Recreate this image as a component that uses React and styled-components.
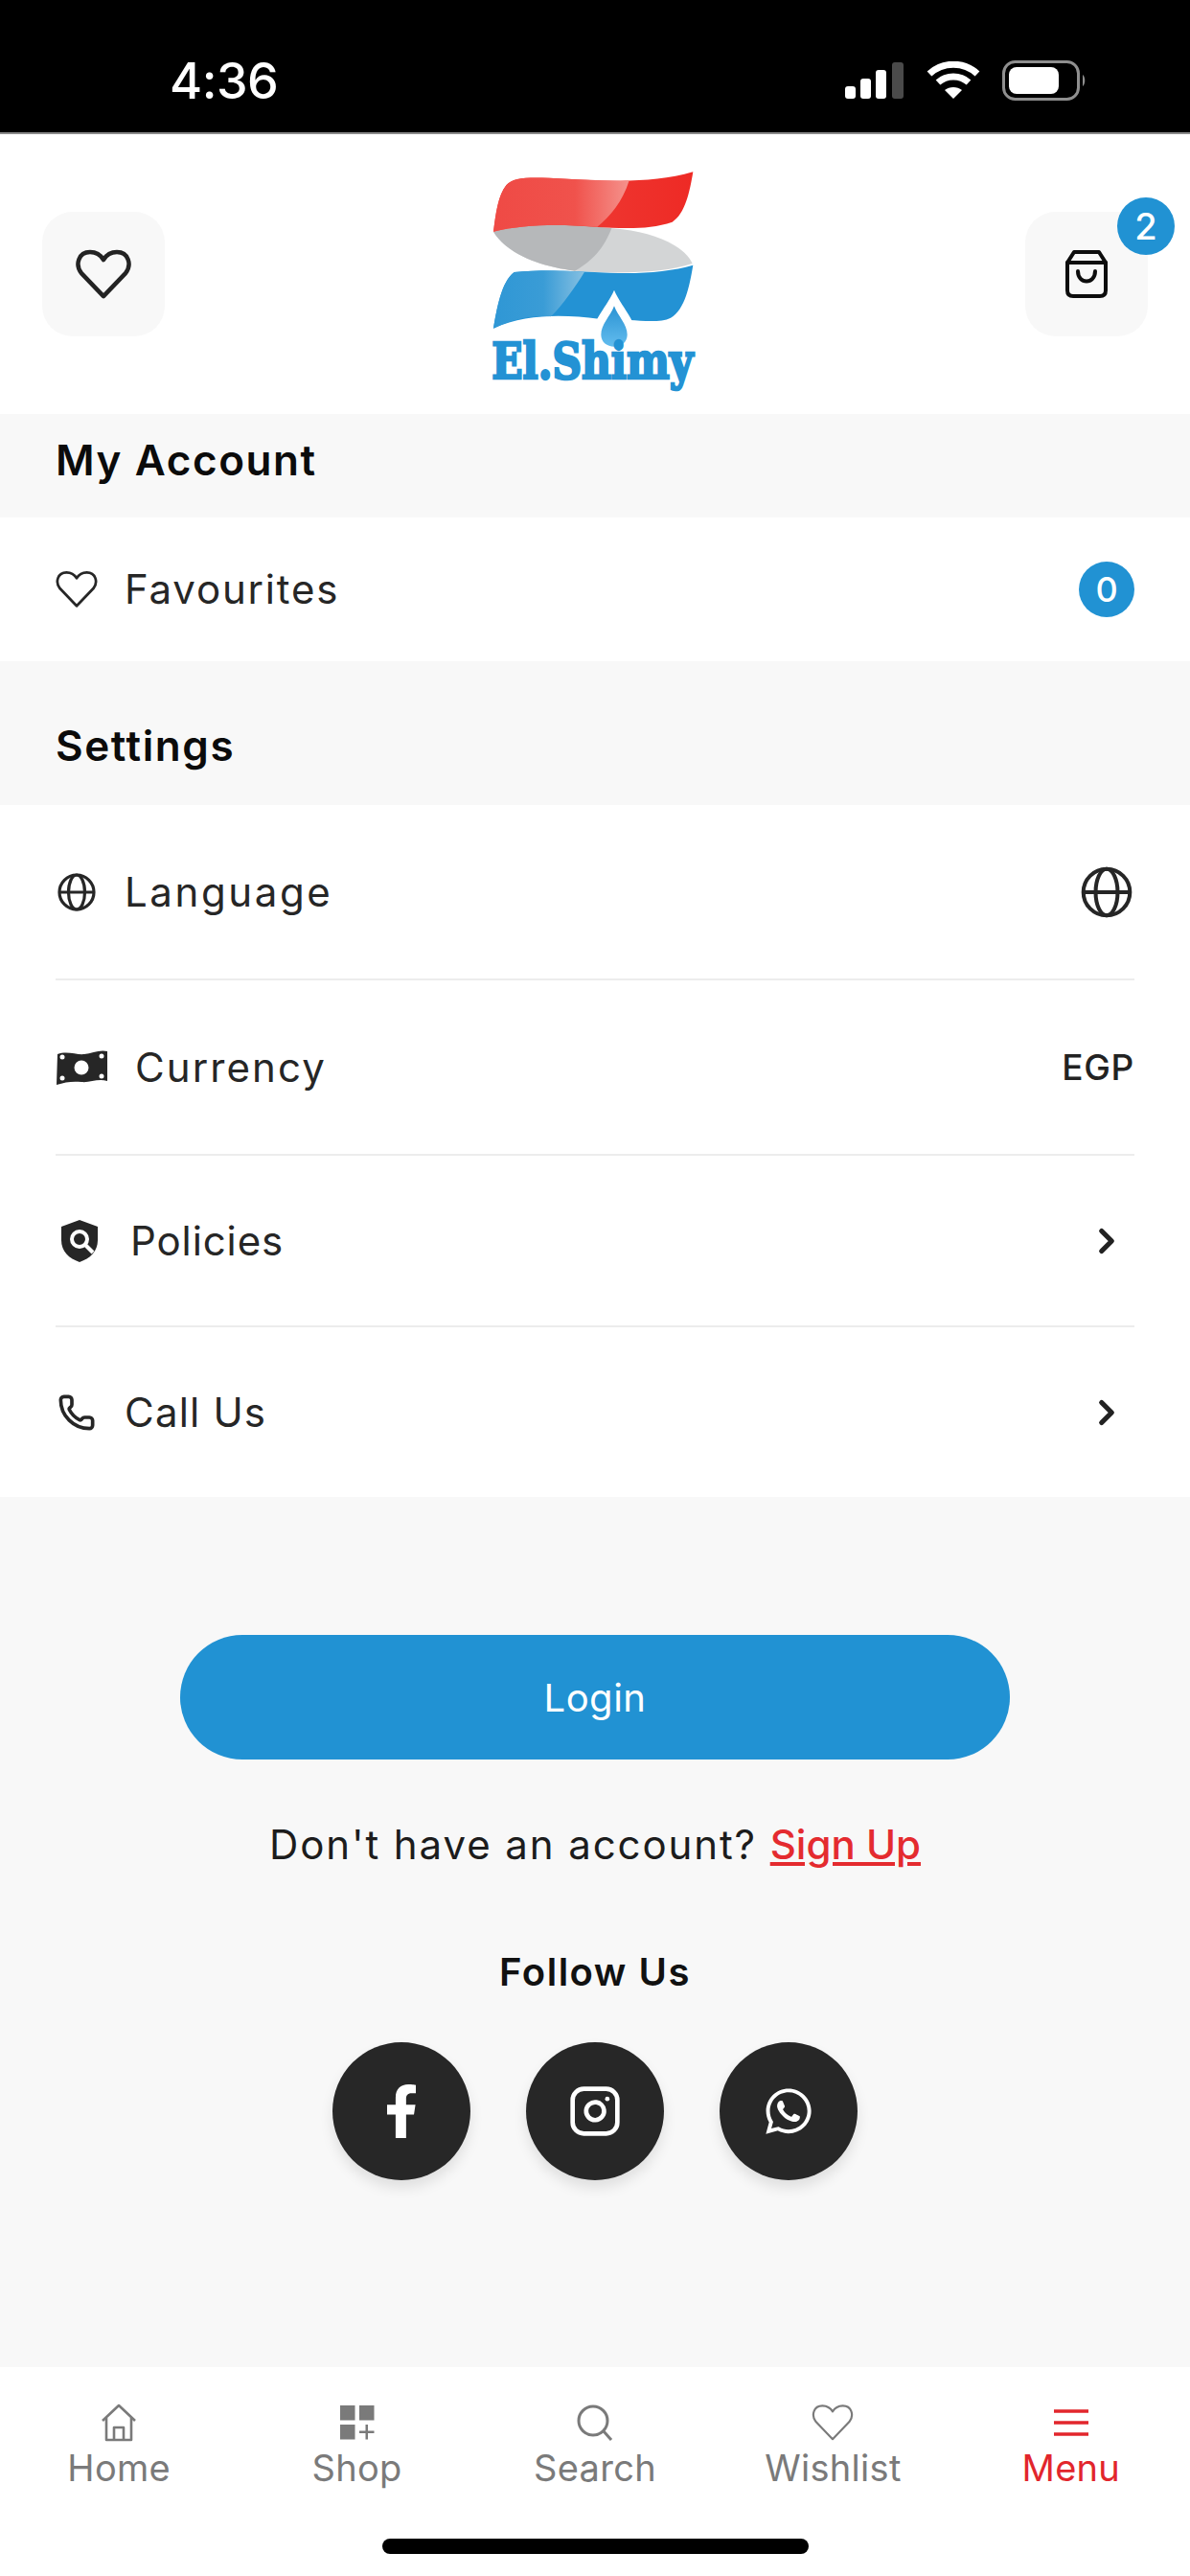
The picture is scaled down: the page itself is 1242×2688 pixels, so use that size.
import React from "react";
import styled, { createGlobalStyle } from "styled-components";
import { Phone, ChevronRight, Instagram } from "lucide-react";
import { FaFacebookF, FaWhatsapp } from "react-icons/fa";

const Global = createGlobalStyle`
  html, body { margin: 0; padding: 0; background: #f8f8f8; }
  * { box-sizing: border-box; }
  body { font-family: Inter, "Noto Sans", sans-serif; }
`;

const Page = styled.div`
  width: 1242px;
  height: 2688px;
  display: flex;
  flex-direction: column;
  overflow: hidden;
  background: #f8f8f8;
  color: #232323;
`;

const StatusBar = styled.div`
  height: 140px;
  flex: none;
  background: #000;
  border-bottom: 2px solid #8a8a8a;
  display: flex;
  align-items: flex-start;
  justify-content: space-between;
  padding: 57px 108px 0 177px;
  color: #fff;
`;
const Time = styled.span`
  font-size: 52px;
  line-height: 56px;
  font-weight: 500;
  letter-spacing: -0.5px;
`;
const StatusIcons = styled.div`
  display: flex;
  align-items: center;
  gap: 23px;
  margin-top: 6px;
`;

const Header = styled.header`
  height: 292px;
  flex: none;
  background: #fff;
  display: flex;
  align-items: flex-start;
  justify-content: space-between;
  padding: 81px 44px 0 44px;
`;
const SquareButton = styled.div`
  position: relative;
  width: 128px;
  height: 130px;
  border-radius: 32px;
  background: #f8f8f8;
  display: flex;
  align-items: center;
  justify-content: center;
`;
const CartBadge = styled.span`
  position: absolute;
  top: -15px;
  right: -28px;
  width: 60px;
  height: 60px;
  border-radius: 50%;
  background: #2192d3;
  color: #fff;
  font-size: 38px;
  font-weight: 500;
  display: flex;
  align-items: center;
  justify-content: center;
`;
const LogoBox = styled.div`
  width: 334px;
  height: 260px;
  margin: -61px 0 0 12px;
  flex: none;
`;

const SectionTitle = styled.div`
  height: ${(p) => p.$height}px;
  flex: none;
  background: #f8f8f8;
  padding: ${(p) => p.$top}px 58px 0;
  font-size: 44px;
  line-height: 60px;
  font-weight: 600;
  color: #0b0b0b;
  letter-spacing: 1.6px;
`;

const List = styled.div`
  flex: none;
  background: #fff;
  padding: 0 58px;
`;
const Row = styled.div`
  height: ${(p) => p.$height}px;
  display: flex;
  align-items: center;
  justify-content: space-between;
  ${(p) => (p.$divider ? "border-bottom: 2px solid #ececec;" : "")}
`;
const RowLead = styled.div`
  display: flex;
  align-items: center;
  gap: ${(p) => p.$gap}px;
  padding-left: ${(p) => p.$inset || 0}px;
`;
const RowLabel = styled.span`
  font-size: 42px;
  line-height: 56px;
  font-weight: 400;
  color: #262626;
  letter-spacing: ${(p) => p.$track}px;
`;
const CountBadge = styled.span`
  width: 58px;
  height: 58px;
  border-radius: 50%;
  background: #2192d3;
  color: #fff;
  font-size: 36px;
  font-weight: 500;
  display: flex;
  align-items: center;
  justify-content: center;
`;
const ValueText = styled.span`
  font-size: 37px;
  font-weight: 500;
  color: #222;
  letter-spacing: 0.7px;
`;
const TrailIcon = styled.span`
  display: flex;
  width: 58px;
  justify-content: center;
  color: #222;
`;

const Main = styled.main`
  flex: 1;
  display: flex;
  flex-direction: column;
  align-items: center;
  padding-top: 144px;
`;
const LoginButton = styled.button`
  width: 866px;
  height: 130px;
  border: 0;
  border-radius: 65px;
  background: #2192d3;
  color: #fff;
  font-family: inherit;
  font-size: 40px;
  font-weight: 400;
  letter-spacing: 0.5px;
`;
const AccountLine = styled.p`
  margin: 59px 0 0;
  font-size: 42px;
  line-height: 60px;
  color: #1c1c1c;
  letter-spacing: 1.9px;
`;
const SignUp = styled.a`
  color: #e42b2f;
  font-weight: 500;
  letter-spacing: 0;
  text-decoration: underline;
`;
const FollowTitle = styled.h3`
  margin: 78px 0 0;
  font-size: 40px;
  line-height: 50px;
  font-weight: 600;
  color: #111;
  letter-spacing: 1.5px;
`;
const Socials = styled.div`
  display: flex;
  gap: 58px;
  margin-top: 48px;
`;
const SocialButton = styled.a`
  width: 144px;
  height: 144px;
  border-radius: 50%;
  background: #272727;
  color: #fff;
  display: flex;
  align-items: center;
  justify-content: center;
  box-shadow: 0 8px 14px rgba(0, 0, 0, 0.1);
`;

const BottomBar = styled.nav`
  height: 218px;
  flex: none;
  background: #fff;
  display: flex;
  flex-direction: column;
  align-items: center;
  padding-top: 38px;
`;
const Tabs = styled.div`
  width: 100%;
  display: flex;
`;
const Tab = styled.div`
  flex: 1;
  display: flex;
  flex-direction: column;
  align-items: center;
  color: ${(p) => (p.$active ? "#e2262c" : "#7a7a7a")};
`;
const TabIcon = styled.div`
  height: 40px;
  display: flex;
  align-items: center;
  justify-content: center;
`;
const TabLabel = styled.span`
  margin-top: 5px;
  font-size: 38px;
  line-height: 44px;
  letter-spacing: 0.3px;
`;
const HomeIndicator = styled.div`
  width: 445px;
  height: 16px;
  border-radius: 8px;
  background: #000;
  margin-top: 52px;
`;

const HeartIcon = ({ size = 58, w = 4.5, color = "currentColor" }) => (
  <svg width={size} height={size * 0.9} viewBox="0 0 58 52" fill="none" stroke={color} strokeWidth={w} strokeLinejoin="round">
    <path d="M29 49 L6 25 C-1 16 3 3 15 3 C21 3 26 6 29 11 C32 6 37 3 43 3 C55 3 59 16 52 25 Z" />
  </svg>
);

const Logo = () => (
  <svg width="334" height="260" viewBox="0 0 1002 780">
    <defs>
      <linearGradient id="redLeft" x1="0" x2="1" y1="0" y2="0">
        <stop offset="0" stopColor="#ef4a45" />
        <stop offset="0.6" stopColor="#f0524c" />
        <stop offset="1" stopColor="#f5928c" />
      </linearGradient>
      <linearGradient id="redRight" x1="0" x2="1" y1="0" y2="0">
        <stop offset="0" stopColor="#ee423b" />
        <stop offset="1" stopColor="#ee2a25" />
      </linearGradient>
      <linearGradient id="blueLeft" x1="0" x2="1" y1="0" y2="0">
        <stop offset="0" stopColor="#2f97d5" />
        <stop offset="0.55" stopColor="#3a9cd6" />
        <stop offset="1" stopColor="#86c0e2" />
      </linearGradient>
      <linearGradient id="dropG" x1="0" x2="0" y1="0" y2="1">
        <stop offset="0" stopColor="#2b93d3" />
        <stop offset="1" stopColor="#62bcee" />
      </linearGradient>
    </defs>
    <path d="M165 245 C300 215 420 225 540 235 C660 245 760 285 788 345 C700 375 560 378 420 368 C320 355 210 320 165 245 Z" fill="#d3d5d6" />
    <path d="M165 245 C290 215 420 222 535 235 C510 300 470 340 420 368 C320 355 210 320 165 245 Z" fill="#b6b8ba" />
    <path d="M165 245 C172 190 180 130 205 100 C225 75 270 75 340 77 C490 84 650 100 790 58 C780 120 765 190 725 215 C650 240 570 235 480 230 C370 222 260 222 165 245 Z" fill="url(#redRight)" />
    <path d="M165 245 C172 190 180 130 205 100 C225 75 270 75 340 77 C430 81 510 86 590 85 C570 150 530 200 490 230 C370 222 260 222 165 245 Z" fill="url(#redLeft)" />
    <path d="M230 372 C330 362 430 370 530 374 C630 378 720 370 790 350 C780 410 765 490 720 515 C690 530 640 525 590 522 L495 518 C390 505 270 500 165 548 C175 490 190 400 230 372 Z" fill="#2392d4" />
    <path d="M230 372 C330 362 400 368 450 371 C420 420 385 470 345 511 C280 505 220 520 165 548 C175 490 190 400 230 372 Z" fill="url(#blueLeft)" />
    <path d="M543 428 C565 480 610 520 610 565 C610 605 580 625 543 625 C506 625 476 605 476 565 C476 520 521 480 543 428 Z" fill="#fff" />
    <path d="M543 478 C555 510 584 535 584 568 C584 592 565 605 543 605 C521 605 502 592 502 568 C502 535 531 510 543 478 Z" fill="url(#dropG)" />
    <text x="160" y="706" textLength="630" lengthAdjust="spacingAndGlyphs" fontFamily="'DejaVu Serif', serif" fontWeight="700" fontSize="158" fill="#2392d4" stroke="#2392d4" strokeWidth="8">El.Shimy</text>
  </svg>
);

const BagIcon = () => (
  <svg width="44" height="50" viewBox="0 0 44 50" fill="none" stroke="#0d0d0d" strokeWidth="4" strokeLinejoin="round" strokeLinecap="round">
    <path d="M9 2 H35 L42 13 V42 Q42 48 36 48 H8 Q2 48 2 42 V13 Z" />
    <path d="M2 13 H42" />
    <path d="M13 22 C13 36 31 36 31 22" />
  </svg>
);

const GlobeIcon = ({ size, w }) => (
  <svg width={size} height={size} viewBox="0 0 40 40" fill="none" stroke="#262626" strokeWidth={w}>
    <circle cx="20" cy="20" r="18" />
    <ellipse cx="20" cy="20" rx="8.5" ry="18" />
    <path d="M2 20 H38" />
  </svg>
);

const BillIcon = () => (
  <svg width="55" height="38" viewBox="0 0 55 38">
    <path d="M2 5 C12 1 22 6 30 5 C38 4 46 0 54 2 V33 C44 30 36 35 27 34 C18 33 10 34 1 37 Z" fill="#262626" />
    <circle cx="27" cy="19" r="7.5" fill="#fff" />
    <circle cx="7" cy="8" r="2.5" fill="#fff" />
    <circle cx="48" cy="7" r="2.5" fill="#fff" />
    <circle cx="7" cy="30" r="2.5" fill="#fff" />
    <circle cx="48" cy="28" r="2.5" fill="#fff" />
  </svg>
);

const ShieldIcon = () => (
  <svg width="38" height="44" viewBox="0 0 38 44">
    <path d="M19 0 L38 7 V21 C38 33 30 40 19 44 C8 40 0 33 0 21 V7 Z" fill="#262626" />
    <circle cx="19" cy="20" r="8" fill="none" stroke="#fff" strokeWidth="4" />
    <path d="M25 26 L33 34" stroke="#fff" strokeWidth="4" />
  </svg>
);

const SignalIcon = () => (
  <svg width="62" height="38" viewBox="0 0 62 38" fill="#fff">
    <rect x="0" y="25" width="11" height="13" rx="3" />
    <rect x="16" y="17" width="11" height="21" rx="3" />
    <rect x="32" y="8" width="11" height="30" rx="3" />
    <rect x="49" y="0" width="12" height="38" rx="3" fill="#4a4a4a" />
  </svg>
);
const WifiIcon = () => (
  <svg width="56" height="40" viewBox="0 0 56 40" fill="none" stroke="#fff" strokeWidth="7">
    <path d="M3 13 C17 0 39 0 53 13" />
    <path d="M12 22 C21 14 35 14 44 22" />
    <path d="M28 39 L19 30 C24 26 32 26 37 30 Z" fill="#fff" stroke="none" />
  </svg>
);
const BatteryIcon = () => (
  <svg width="88" height="42" viewBox="0 0 88 42">
    <rect x="1.5" y="1.5" width="78" height="39" rx="12" fill="none" stroke="#8f8f8f" strokeWidth="3" />
    <rect x="7" y="7" width="52" height="28" rx="8" fill="#fff" />
    <path d="M84 15 C87 17 87 25 84 27 Z" fill="#8f8f8f" />
  </svg>
);

const HomeGlyph = () => (
  <svg width="36" height="40" viewBox="0 0 36 40" fill="none" stroke="currentColor" strokeWidth="2.6" strokeLinejoin="round">
    <path d="M1 18 L18 2 L35 18" />
    <path d="M5 15 V38 H31 V15" />
    <path d="M13 38 V25 H23 V38" />
  </svg>
);
const ShopGlyph = () => (
  <svg width="36" height="36" viewBox="0 0 36 36" fill="currentColor">
    <rect x="0" y="0" width="15.5" height="15.5" />
    <rect x="20" y="0" width="15.5" height="15.5" />
    <rect x="0" y="20" width="15.5" height="15.5" />
    <path d="M26.5 20 H29 V26.5 H35.5 V29 H29 V35.5 H26.5 V29 H20 V26.5 H26.5 Z" />
  </svg>
);
const SearchGlyph = () => (
  <svg width="38" height="38" viewBox="0 0 38 38" fill="none" stroke="currentColor" strokeWidth="3">
    <circle cx="17" cy="17" r="15" />
    <path d="M28 28 L36 37" />
  </svg>
);
const MenuGlyph = () => (
  <svg width="36" height="28" viewBox="0 0 36 28" fill="none" stroke="currentColor" strokeWidth="3.6">
    <path d="M0 2 H36 M0 14 H36 M0 26 H36" />
  </svg>
);

const tabs = [
  { label: "Home", icon: <HomeGlyph /> },
  { label: "Shop", icon: <ShopGlyph /> },
  { label: "Search", icon: <SearchGlyph /> },
  { label: "Wishlist", icon: <HeartIcon size={44} w={2.8} /> },
  { label: "Menu", icon: <MenuGlyph />, active: true },
];

export default function App() {
  return (
    <Page>
      <Global />
      <StatusBar>
        <Time>4:36</Time>
        <StatusIcons>
          <SignalIcon />
          <WifiIcon />
          <BatteryIcon />
        </StatusIcons>
      </StatusBar>

      <Header>
        <SquareButton>
          <HeartIcon />
        </SquareButton>
        <LogoBox>
          <Logo />
        </LogoBox>
        <SquareButton>
          <BagIcon />
          <CartBadge>2</CartBadge>
        </SquareButton>
      </Header>

      <SectionTitle $height={108} $top={18}>My Account</SectionTitle>
      <List>
        <Row $height={150}>
          <RowLead $gap={28}>
            <HeartIcon size={44} w={3.6} color="#262626" />
            <RowLabel $track={1.8}>Favourites</RowLabel>
          </RowLead>
          <CountBadge>0</CountBadge>
        </Row>
      </List>

      <SectionTitle $height={150} $top={58}>Settings</SectionTitle>
      <List>
        <Row $height={183} $divider>
          <RowLead $gap={30} $inset={2}>
            <GlobeIcon size={40} w={3.2} />
            <RowLabel $track={2.6}>Language</RowLabel>
          </RowLead>
          <TrailIcon>
            <GlobeIcon size={54} w={3} />
          </TrailIcon>
        </Row>
        <Row $height={183} $divider>
          <RowLead $gap={28}>
            <BillIcon />
            <RowLabel $track={2.1}>Currency</RowLabel>
          </RowLead>
          <ValueText>EGP</ValueText>
        </Row>
        <Row $height={179} $divider>
          <RowLead $gap={34} $inset={6}>
            <ShieldIcon />
            <RowLabel $track={0.9}>Policies</RowLabel>
          </RowLead>
          <TrailIcon>
            <ChevronRight size={42} strokeWidth={3} />
          </TrailIcon>
        </Row>
        <Row $height={177}>
          <RowLead $gap={30} $inset={2}>
            <Phone size={40} strokeWidth={2.2} color="#262626" />
            <RowLabel $track={1.2}>Call Us</RowLabel>
          </RowLead>
          <TrailIcon>
            <ChevronRight size={42} strokeWidth={3} />
          </TrailIcon>
        </Row>
      </List>

      <Main>
        <LoginButton>Login</LoginButton>
        <AccountLine>
          Don't have an account? <SignUp>Sign Up</SignUp>
        </AccountLine>
        <FollowTitle>Follow Us</FollowTitle>
        <Socials>
          <SocialButton><FaFacebookF size={56} /></SocialButton>
          <SocialButton><Instagram size={56} strokeWidth={2} /></SocialButton>
          <SocialButton><FaWhatsapp size={54} /></SocialButton>
        </Socials>
      </Main>

      <BottomBar>
        <Tabs>
          {tabs.map((t) => (
            <Tab key={t.label} $active={t.active}>
              <TabIcon>{t.icon}</TabIcon>
              <TabLabel>{t.label}</TabLabel>
            </Tab>
          ))}
        </Tabs>
        <HomeIndicator />
      </BottomBar>
    </Page>
  );
}
